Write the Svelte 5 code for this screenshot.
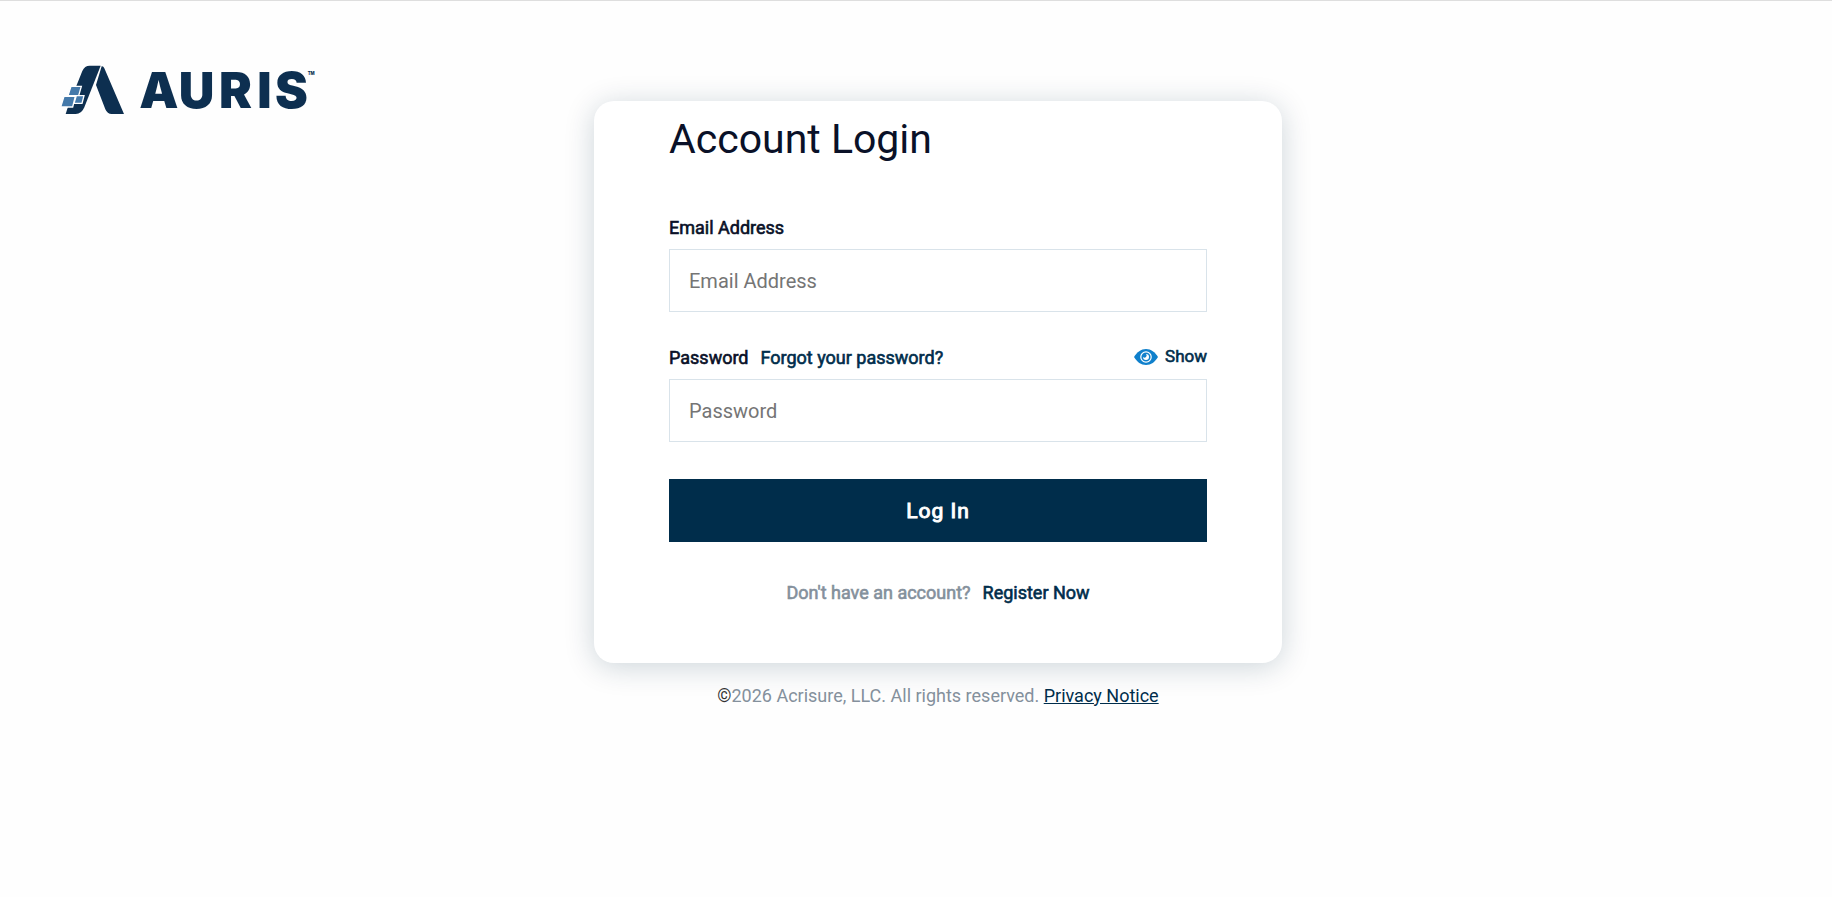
<script>
  let email = '';
  let password = '';
  let showPassword = false;

  const year = 2026;

  function togglePassword() {
    showPassword = !showPassword;
  }
</script>

<div class="page">
  <header>
    <a class="logo" href="/" aria-label="Auris">
      <svg width="253" height="50" viewBox="33 43 759 150">
        <path fill="#0d2f50" d="M47 190 L54 168 L97 61 Q104 45 119 45 H152 L103 170 Q95 190 77 190 Z" />
        <path fill="#0d2f50" d="M155 47 Q160 46 163 53 L222 190 H185 Q172 190 166 176 L138 103 Z" />
        <g fill="#4479aa" stroke="#fff" stroke-width="4">
          <path d="M63 107 H94 L86 135 H54 Z" />
          <path d="M79 135 H102 L96 158 H72 Z" />
          <path d="M42 137 H76 L68 169 H32 Z" />
        </g>
        <text class="wordmark" x="268 386 507 622 675" y="172">AURIS</text>
        <text class="tm" x="773" y="73">TM</text>
      </svg>
    </a>
  </header>

  <main>
    <form class="card" on:submit|preventDefault>
      <h1>Account Login</h1>

      <div class="field">
        <div class="label-row">
          <label for="email">Email Address</label>
        </div>
        <input id="email" type="email" placeholder="Email Address" bind:value={email} />
      </div>

      <div class="field">
        <div class="label-row">
          <label for="password">Password</label>
          <a class="forgot" href="/forgot-password">Forgot your password?</a>
          <button class="toggle" type="button" on:click={togglePassword}>
            <svg width="24" height="16" viewBox="0 0 24 16" aria-hidden="true">
              <path fill="#0f80cc" d="M0 8 C3 3 7 0 12 0 S21 3 24 8 C21 13 17 16 12 16 S3 13 0 8 Z" />
              <circle cx="12" cy="8" r="5.2" fill="none" stroke="#fff" stroke-width="1.2" />
              <path fill="#fff" d="M12 5 A3 3 0 1 1 9 8 A1.6 1.6 0 1 0 12 5 Z" />
            </svg>
            {showPassword ? 'Hide' : 'Show'}
          </button>
        </div>
        <input
          id="password"
          type={showPassword ? 'text' : 'password'}
          placeholder="Password"
          value={password}
          on:input={(e) => (password = e.currentTarget.value)}
        />
      </div>

      <button class="submit" type="submit">Log In</button>

      <p class="register">
        <span>Don't have an account?</span>
        <a href="/register">Register Now</a>
      </p>
    </form>

    <footer>
      ©<span>{year} Acrisure, LLC. All rights reserved.</span>
      <a href="/privacy">Privacy Notice</a>
    </footer>
  </main>
</div>

<style>
  :global(body) {
    background: #fefefe;
  }

  .page {
    display: grid;
    grid-template-columns: 27fr minmax(auto, 688px) 25fr;
    min-height: 100vh;
    box-sizing: border-box;
    border-top: 1px solid #dedede;
    font-family: Roboto, sans-serif;
    color: #0a1128;
  }

  header {
    padding: 64px 0 0 61px;
  }

  .logo svg {
    display: block;
    overflow: visible;
  }

  .wordmark {
    font-family: Inter, sans-serif;
    font-size: 148px;
    font-weight: 900;
    fill: #0d2f50;
  }

  .tm {
    font-family: Inter, sans-serif;
    font-size: 13px;
    font-weight: 800;
    fill: #0d2f50;
  }

  main {
    padding-top: 100px;
  }

  .card {
    box-sizing: border-box;
    padding: 14px 75px 58px;
    border-radius: 20px;
    background: #fff;
    box-shadow: 0 4px 30px rgba(0, 45, 70, 0.2);
  }

  h1 {
    margin: 0 0 53px;
    font-size: 41px;
    font-weight: 400;
    line-height: 48px;
  }

  .field {
    margin-bottom: 34px;
  }

  .label-row {
    display: flex;
    align-items: center;
    height: 24px;
    margin-bottom: 9px;
    font-size: 18px;
    line-height: 24px;
    -webkit-text-stroke: 0.6px;
  }

  .forgot {
    margin-left: 12px;
    color: #002d4b;
    text-decoration: none;
  }

  .toggle {
    display: flex;
    align-items: center;
    align-self: flex-start;
    gap: 7px;
    margin-left: auto;
    padding: 0;
    border: 0;
    background: none;
    color: #002d4b;
    font: inherit;
    font-size: 17px;
    line-height: 21px;
    -webkit-text-stroke: 0.6px;
    cursor: pointer;
  }

  input {
    display: block;
    box-sizing: border-box;
    width: 100%;
    height: 63px;
    padding: 0 19px;
    border: 1px solid #d9e3ea;
    border-radius: 0;
    background: #fff;
    color: #0a1128;
    font-family: inherit;
    font-size: 20px;
  }

  input::placeholder {
    color: #757575;
  }

  .submit {
    display: block;
    width: 100%;
    height: 63px;
    margin-top: 37px;
    border: 0;
    background: #002d4b;
    color: #fff;
    font-family: inherit;
    font-size: 21px;
    letter-spacing: 1px;
    -webkit-text-stroke: 1px;
    cursor: pointer;
  }

  .register {
    display: flex;
    justify-content: center;
    gap: 12px;
    margin: 39px 0 0;
    font-size: 18px;
    line-height: 24px;
    -webkit-text-stroke: 0.6px;
  }

  .register span,
  footer span {
    color: #84909c;
  }

  .register a {
    color: #002d4b;
    text-decoration: none;
  }

  footer {
    margin-top: 21px;
    font-size: 18px;
    line-height: 24px;
    text-align: center;
    color: #333;
  }

  footer a {
    color: #002d4b;
  }
</style>
